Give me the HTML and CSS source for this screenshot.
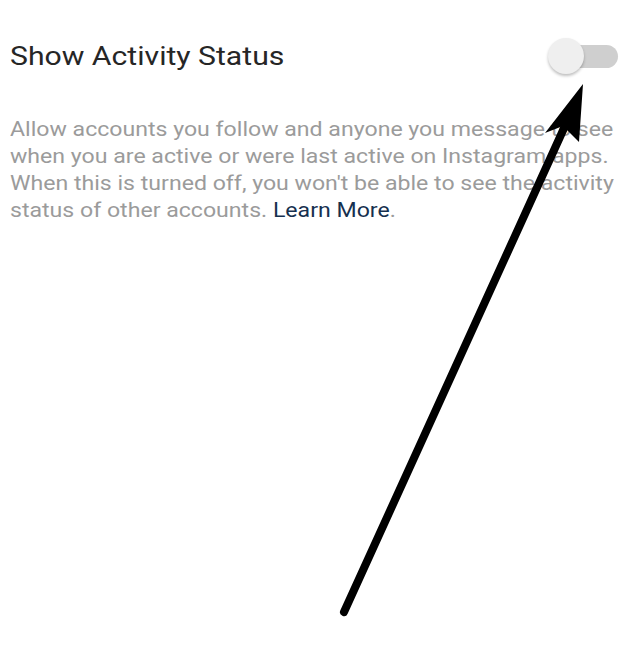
FILE: index.html
```html
<!DOCTYPE html>
<html>
<head>
<meta charset="utf-8">
<link rel="stylesheet" href="styles.css">
</head>
<body>
<div class="page">
  <div class="row">
    <div class="title">Show Activity Status</div>
    <div class="toggle"><div class="track"></div><div class="thumb"></div></div>
  </div>
  <p class="desc">Allow accounts you follow and anyone you message to see when you are active or were last active on Instagram apps. When this is turned off, you won't be able to see the activity status of other accounts. <a class="link">Learn More</a>.</p>
</div>
<svg class="arrow" width="632" height="646" viewBox="0 0 632 646">
  <line x1="344" y1="612" x2="570" y2="115" stroke="#000" stroke-width="8" stroke-linecap="round"/>
  <polygon points="583,84 545,133 563,126 579,142" fill="#000"/>
</svg>
</body>
</html>
```
FILE: styles.css
```css
html, body { margin: 0; padding: 0; background: #fff; }
body { font-family: Roboto, "Noto Sans", sans-serif; width: 632px; height: 646px; overflow: hidden; position: relative; }
.page { padding: 37px 14px 0 10px; }
.row { display: flex; justify-content: space-between; align-items: center; height: 38px; }
.title { font-size: 26px; color: #262626; line-height: 38px; transform: scaleX(1.16); transform-origin: left center; }
.toggle { position: relative; width: 70px; height: 38px; }
.track { position: absolute; left: 12px; top: 8px; width: 58px; height: 23px; border-radius: 12px; background: #cfcfcf; }
.thumb { position: absolute; left: 0; top: 1px; width: 36px; height: 36px; border-radius: 50%; background: #efefef; box-shadow: 0 2px 3px rgba(0,0,0,0.25); }
.desc { margin: 41px 0 0; width: 524px; font-size: 20px; line-height: 27px; color: #9b9b9b; transform: scaleX(1.155); transform-origin: left top; }
.link { color: #16304f; }
.arrow { position: absolute; left: 0; top: 0; }
```
